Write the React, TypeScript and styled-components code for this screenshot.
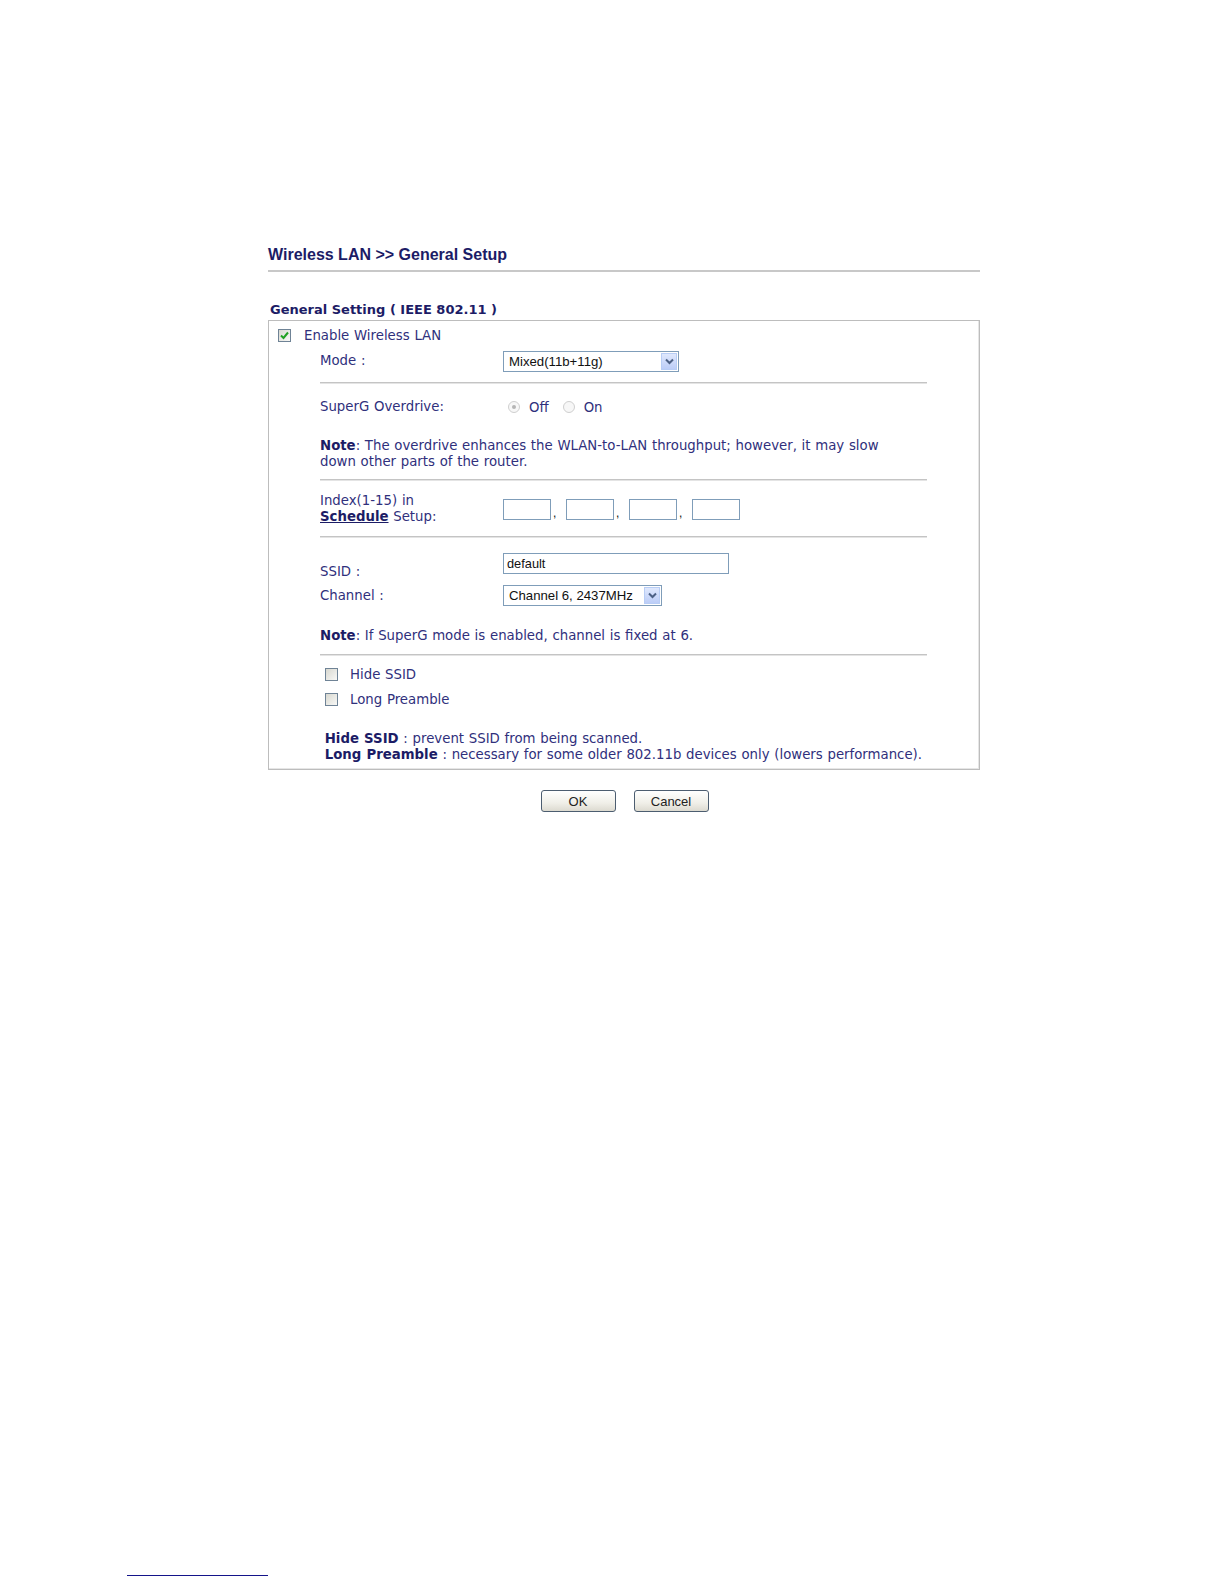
import React from "react";
import styled, { createGlobalStyle } from "styled-components";

const Global = createGlobalStyle`
  html, body { margin: 0; padding: 0; background: #ffffff; }
  body { font-family: "DejaVu Sans", Verdana, sans-serif; }
`;

const TEXT = "#30307c";
const STRONG = "#1c1c66";

const Page = styled.div`
  width: 1224px;
  height: 1584px;
  display: flex;
  flex-direction: column;
  box-sizing: border-box;
  padding-top: 246px;
  overflow: hidden;
`;

const Main = styled.div`
  margin-left: 268px;
  width: 712px;
  display: flex;
  flex-direction: column;
`;

const Title = styled.h1`
  margin: 0;
  font-family: "Liberation Sans", Arial, sans-serif;
  font-weight: bold;
  font-size: 16px;
  line-height: 18px;
  color: ${STRONG};
`;

const TitleRule = styled.div`
  margin-top: 6px;
  height: 2px;
  background: #c8c8c8;
`;

const SectionTitle = styled.div`
  margin-top: 30px;
  padding-left: 2px;
  font-weight: bold;
  font-size: 13px;
  line-height: 16px;
  color: ${STRONG};
`;

const Box = styled.div`
  margin-top: 2px;
  border: 1px solid #bdbdbd;
  box-shadow: inset -1px -1px 0 #e6e6e6;
  padding: 0 0 6px 0;
  display: flex;
  flex-direction: column;
`;

const TopRow = styled.div`
  height: 29px;
  display: flex;
  align-items: center;
  padding-left: 9px;
  gap: 13px;
  font-size: 13.3px;
  word-spacing: 0.5px;
  color: ${TEXT};
`;

const Inner = styled.div`
  margin-left: 51px;
  width: 607px;
  display: flex;
  flex-direction: column;
  font-size: 13.3px;
  word-spacing: 0.5px;
  color: ${TEXT};
`;

const Row = styled.div<{ $h: number; $mt?: number; $top?: boolean }>`
  height: ${(p) => p.$h}px;
  margin-top: ${(p) => p.$mt ?? 0}px;
  display: flex;
  align-items: ${(p) => (p.$top ? "flex-start" : "center")};
`;

const Label = styled.div<{ $mt?: number }>`
  width: 183px;
  flex: none;
  line-height: 16px;
  margin-top: ${(p) => p.$mt ?? 0}px;
`;

const Rule = styled.div<{ $mt: number }>`
  margin-top: ${(p) => p.$mt}px;
  height: 2px;
  background: linear-gradient(#c4c4c4 50%, #e4e4e4 50%);
`;

const Para = styled.p<{ $mt: number }>`
  margin: ${(p) => p.$mt}px 0 0 0;
  line-height: 16px;
`;

const B = styled.b`
  color: ${STRONG};
`;

const Link = styled.a`
  color: ${STRONG};
  font-weight: bold;
  text-decoration: underline;
`;

const SelectBox = styled.div<{ $w: number }>`
  width: ${(p) => p.$w}px;
  height: 21px;
  box-sizing: border-box;
  border: 1px solid #7f9db9;
  background: #fff;
  display: flex;
  align-items: center;
  justify-content: space-between;
  padding: 0 1px 0 5px;
  font-family: "Liberation Sans", Arial, sans-serif;
  font-size: 13.2px;
  word-spacing: 0;
  color: #111;
`;

const DropBtn = styled.span`
  width: 16px;
  height: 17px;
  box-sizing: border-box;
  border: 1px solid #b8cdf5;
  background: linear-gradient(#dfe8fd, #bccdf7);
  display: flex;
  align-items: center;
  justify-content: center;
`;

const TextBox = styled.div<{ $w: number }>`
  width: ${(p) => p.$w}px;
  height: 21px;
  box-sizing: border-box;
  border: 1px solid #7f9db9;
  background: #fff;
  display: flex;
  align-items: center;
  padding-left: 3px;
  font-family: "Liberation Sans", Arial, sans-serif;
  font-size: 12.8px;
  word-spacing: 0;
  color: #111;
`;

const IndexGroup = styled.div`
  display: flex;
  align-items: center;
`;

const Comma = styled.span`
  width: 15px;
  align-self: flex-end;
  line-height: 14px;
  padding-left: 2px;
  box-sizing: border-box;
  font-family: "Liberation Sans", Arial, sans-serif;
  font-size: 12px;
  color: #111;
`;

const Check = styled.span`
  width: 13px;
  height: 13px;
  flex: none;
  box-sizing: border-box;
  border: 1px solid #6f8396;
  background: linear-gradient(135deg, #d8d8d0, #f8f8f6);
  display: flex;
  align-items: center;
  justify-content: center;
`;

const CheckRow = styled.div<{ $mt: number }>`
  height: 20px;
  margin-top: ${(p) => p.$mt}px;
  display: flex;
  align-items: center;
  gap: 12px;
  padding-left: 5px;
`;

const RadioGroup = styled.div`
  display: flex;
  align-items: center;
`;

const Radio = styled.span<{ $on?: boolean }>`
  width: 12px;
  height: 12px;
  box-sizing: border-box;
  border-radius: 50%;
  border: 1px solid #cfcfcf;
  background: #f7f7f7;
  margin: 0 9px 0 5px;
  display: flex;
  align-items: center;
  justify-content: center;
  &::after {
    content: "";
    width: 4px;
    height: 4px;
    border-radius: 50%;
    background: ${(p) => (p.$on ? "#b5b5b5" : "transparent")};
  }
`;

const RadioText = styled.span`
  margin-right: 9px;
`;

const Buttons = styled.div`
  margin-top: 20px;
  display: flex;
  justify-content: center;
  gap: 18px;
  padding-left: 1px;
`;

const Button = styled.button`
  width: 75px;
  height: 22px;
  box-sizing: border-box;
  border: 1px solid #4c5d70;
  border-radius: 3px;
  background: linear-gradient(#ffffff, #f0efe8 60%, #dcdad0);
  font-family: "Liberation Sans", Arial, sans-serif;
  font-size: 13px;
  color: #222;
  padding: 0;
`;

const Footnote = styled.div`
  margin-left: 127px;
  margin-top: 763px;
  width: 141px;
  height: 1px;
  background: #14148a;
`;

const Chevron = () => (
  <svg width="9" height="7" viewBox="0 0 9 7">
    <path d="M1 1.5 L4.5 5 L8 1.5" stroke="#4d6185" strokeWidth="2" fill="none" />
  </svg>
);

const CheckMark = () => (
  <svg width="9" height="9" viewBox="0 0 9 9">
    <path d="M1 4.5 L3.5 7 L8 1.5" stroke="#21a121" strokeWidth="2" fill="none" />
  </svg>
);

export default function App() {
  return (
    <Page>
      <Global />
      <Main>
        <Title>Wireless LAN &gt;&gt; General Setup</Title>
        <TitleRule />
        <SectionTitle>General Setting ( IEEE 802.11 )</SectionTitle>
        <Box>
          <TopRow>
            <Check>
              <CheckMark />
            </Check>
            <span>Enable Wireless LAN</span>
          </TopRow>
          <Inner>
            <Row $h={22}>
              <Label>Mode :</Label>
              <SelectBox $w={176}>
                <span>Mixed(11b+11g)</span>
                <DropBtn>
                  <Chevron />
                </DropBtn>
              </SelectBox>
            </Row>
            <Rule $mt={10} />
            <Row $h={22} $mt={12}>
              <Label>SuperG Overdrive:</Label>
              <RadioGroup>
                <Radio $on />
                <RadioText>Off</RadioText>
                <Radio />
                <RadioText>On</RadioText>
              </RadioGroup>
            </Row>
            <Para $mt={20}>
              <B>Note</B>: The overdrive enhances the WLAN-to-LAN throughput; however, it may slow
              <br />
              down other parts of the router.
            </Para>
            <Rule $mt={9} />
            <Row $h={32} $mt={12}>
              <Label>
                Index(1-15) in
                <br />
                <Link>Schedule</Link> Setup:
              </Label>
              <IndexGroup>
                <TextBox $w={48} />
                <Comma>,</Comma>
                <TextBox $w={48} />
                <Comma>,</Comma>
                <TextBox $w={48} />
                <Comma>,</Comma>
                <TextBox $w={48} />
              </IndexGroup>
            </Row>
            <Rule $mt={11} />
            <Row $h={27} $mt={15} $top>
              <Label $mt={11}>SSID :</Label>
              <TextBox $w={226}>default</TextBox>
            </Row>
            <Row $h={21} $mt={5}>
              <Label>Channel :</Label>
              <SelectBox $w={159}>
                <span>Channel 6, 2437MHz</span>
                <DropBtn>
                  <Chevron />
                </DropBtn>
              </SelectBox>
            </Row>
            <Para $mt={22}>
              <B>Note</B>: If SuperG mode is enabled, channel is fixed at 6.
            </Para>
            <Rule $mt={10} />
            <CheckRow $mt={8}>
              <Check />
              <span>Hide SSID</span>
            </CheckRow>
            <CheckRow $mt={5}>
              <Check />
              <span>Long Preamble</span>
            </CheckRow>
            <Para $mt={22}>
              &nbsp;<B>Hide SSID</B> : prevent SSID from being scanned.
              <br />
              &nbsp;<B>Long Preamble</B> : necessary for some older 802.11b devices only (lowers performance).
            </Para>
          </Inner>
        </Box>
        <Buttons>
          <Button>OK</Button>
          <Button>Cancel</Button>
        </Buttons>
      </Main>
      <Footnote />
    </Page>
  );
}
